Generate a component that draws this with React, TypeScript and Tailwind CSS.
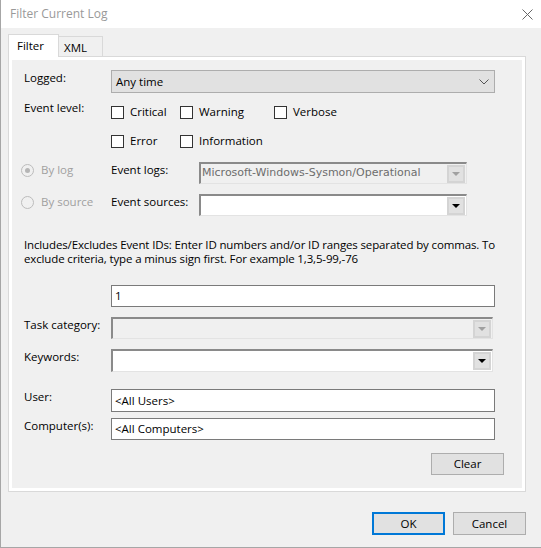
const Check = ({ label, w }: { label: string; w: string }) => (
  <div className={`flex items-center gap-[6px] ${w}`}>
    <span className="w-[13px] h-[13px] border border-[#333333] bg-white shrink-0" />
    <span className="leading-[16px]">{label}</span>
  </div>
);

const Radio = ({ label, checked }: { label: string; checked?: boolean }) => (
  <div className="flex items-start gap-[7px] w-[90px] text-[#a0a0a0]">
    <span className="mt-[2px] w-[13px] h-[13px] rounded-full border border-[#bcbcbc] bg-[#f0f0f0] flex items-center justify-center shrink-0">
      {checked && <span className="w-[5px] h-[5px] rounded-full bg-[#b5b5b5]" />}
    </span>
    <span className="leading-[16px]">{label}</span>
  </div>
);

const Combo = ({ text, disabled, className }: { text?: string; disabled?: boolean; className: string }) => (
  <div
    className={`flex items-center border-t-2 border-l-2 border-r border-b border-t-[#8a8a8a] border-l-[#8a8a8a] border-r-[#e3e3e3] border-b-[#e3e3e3] ${
      disabled ? 'bg-[#f0f0f0]' : 'bg-white'
    } ${className}`}
  >
    <span className="flex-1 pl-[1px] font-['DejaVu_Sans',sans-serif] text-[11px] text-[#6d6d6d] whitespace-nowrap overflow-hidden">
      {text}
    </span>
    <span className="w-[18px] h-[18px] mr-[1px] bg-[#e1e1e1] border-2 border-[#d4d4d4] flex items-center justify-center">
      <svg width="8" height="4" viewBox="0 0 8 4">
        <path d="M0 0h8L4 4z" fill={disabled ? '#a0a0a0' : '#000000'} />
      </svg>
    </span>
  </div>
);

const Label = ({ children, w = 'w-[87px]' }: { children: React.ReactNode; w?: string }) => (
  <span className={`${w} leading-[16px] shrink-0`}>{children}</span>
);

export default function App() {
  return (
    <div className="w-[541px] h-[548px] bg-[#f0f0f0] border-l border-b border-[#a6a6a6] flex flex-col font-['Open_Sans',sans-serif] text-[11.5px] text-black overflow-hidden">
      {/* Title bar */}
      <div className="h-[28px] bg-white flex items-center justify-between pl-[9px] pr-[7px] shrink-0">
        <span className="text-[12px] text-[#999999]">Filter Current Log</span>
        <svg width="11" height="11" viewBox="0 0 11 11" className="mr-[1px]">
          <path d="M0.5 0.5l10 10M10.5 0.5l-10 10" stroke="#666666" strokeWidth="1" />
        </svg>
      </div>

      <div className="flex flex-col pl-[7px] pr-[15px] pt-[6px]">
        {/* Tabs */}
        <div className="flex items-end h-[22px]">
          <div className="relative z-10 h-[23px] -mb-px w-[51px] bg-white border-t border-l border-r border-[#d9d9d9] pl-[8px] pt-[3px] leading-[16px]">
            Filter
          </div>
          <div className="h-[20px] w-[44px] border-t border-r border-[#d9d9d9] pl-[5px] pt-[3px] leading-[16px]">XML</div>
        </div>

        {/* Panel */}
        <div className="h-[436px] border border-[#d9d9d9] bg-white p-[3px] flex">
          <div className="flex-1 bg-[#f0f0f0] flex flex-col pl-[12px] pr-[18px] pt-[10px]">
            <div className="flex items-start">
              <span className="w-[87px] leading-[16px]">Logged:</span>
              <div className="w-[384px] h-[23px] bg-[#e1e1e1] border border-[#adadad] flex items-center justify-between pl-[4px] pr-[5px]">
                <span>Any time</span>
                <svg width="10" height="6" viewBox="0 0 10 6">
                  <path d="M0.5 0.5L5 5l4.5-4.5" fill="none" stroke="#555555" strokeWidth="1" />
                </svg>
              </div>
            </div>

            <div className="flex items-start mt-[7px]">
              <span className="w-[87px] leading-[16px]">Event level:</span>
              <div className="flex flex-col mt-[4px]">
                <div className="flex items-center h-[16px]">
                  <Check label="Critical" w="w-[69px]" />
                  <Check label="Warning" w="w-[94px]" />
                  <Check label="Verbose" w="w-[80px]" />
                </div>
                <div className="flex items-center h-[16px] mt-[13px]">
                  <Check label="Error" w="w-[69px]" />
                  <Check label="Information" w="w-[94px]" />
                </div>
              </div>
            </div>

            <div className="flex items-start mt-[13px] -ml-[3px]">
              <Radio label="By log" checked />
              <Label w="w-[88px]">Event logs:</Label>
              <Combo text="Microsoft-Windows-Sysmon/Operational" disabled className="w-[268px] h-[22px]" />
            </div>

            <div className="flex items-start mt-[10px] -ml-[3px]">
              <Radio label="By source" />
              <Label w="w-[88px]">Event sources:</Label>
              <Combo className="w-[268px] h-[22px]" />
            </div>

            <p className="mt-[22px] leading-[14px] whitespace-nowrap tracking-[-0.14px]">
              Includes/Excludes Event IDs: Enter ID numbers and/or ID ranges separated by commas. To
              <br />
              exclude criteria, type a minus sign first. For example 1,3,5-99,-76
            </p>

            <div className="flex items-start mt-[19px]">
              <Label> </Label>
              <div className="w-[384px] h-[22px] bg-white border border-[#7a7a7a] flex items-center pl-[3px]">1</div>
            </div>

            <div className="flex items-start mt-[10px]">
              <Label>Task category:</Label>
              <Combo disabled className="w-[382px] h-[22px]" />
            </div>

            <div className="flex items-start mt-[10px]">
              <Label>Keywords:</Label>
              <Combo className="w-[382px] h-[23px]" />
            </div>

            <div className="flex items-start mt-[17px]">
              <Label>User:</Label>
              <div className="w-[384px] h-[23px] bg-white border border-[#7a7a7a] flex items-center pl-[3px]">
                &lt;All Users&gt;
              </div>
            </div>

            <div className="flex items-start mt-[6px]">
              <Label>Computer(s):</Label>
              <div className="w-[384px] h-[22px] bg-white border border-[#7a7a7a] flex items-center pl-[3px]">
                &lt;All Computers&gt;
              </div>
            </div>

            <div className="flex justify-end mt-[13px]">
              <button className="w-[73px] h-[22px] bg-[#e1e1e1] border border-[#adadad] leading-[16px]">Clear</button>
            </div>
          </div>
        </div>

        {/* Footer buttons */}
        <div className="flex justify-end gap-[8px] mt-[20px]">
          <button className="w-[73px] h-[23px] bg-[#e1e1e1] border-2 border-[#0078d7] leading-[16px]">OK</button>
          <button className="w-[73px] h-[23px] bg-[#e1e1e1] border border-[#adadad] leading-[16px]">Cancel</button>
        </div>
      </div>
    </div>
  );
}
